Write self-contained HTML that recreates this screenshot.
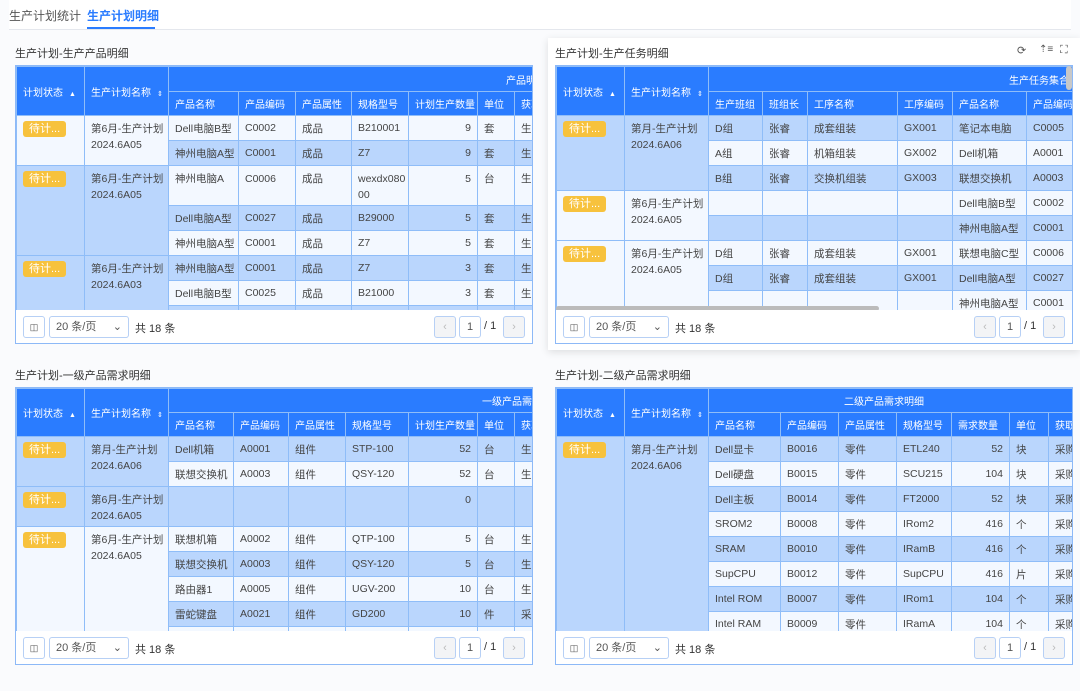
<!DOCTYPE html>
<html><head><meta charset="utf-8"><style>
*{box-sizing:border-box;margin:0;padding:0}
body{width:1080px;height:691px;background:#fafbfd;font-family:"Liberation Sans","Noto Sans CJK SC",sans-serif;position:relative;overflow:hidden;color:#333}
.tabs{position:absolute;left:9px;top:0;width:1062px;height:30px;border-bottom:1px solid #e4e7ed;background:#fff}
.tab{position:absolute;top:7px;font-size:12px;color:#555}
.tab.on{color:#2a7cff;font-weight:bold}
.ul{position:absolute;left:78px;top:27px;width:68px;height:2px;background:#2a7cff}
.title{position:absolute;font-size:11px;color:#333}
.card{position:absolute;left:548px;top:38px;width:532px;height:312px;background:#fff;box-shadow:0 2px 8px rgba(0,0,0,.12)}
.tw{position:absolute;overflow:hidden;border:1px solid #8db9f7;background:#fff}
table{border-collapse:collapse;table-layout:fixed;font-size:10.5px;color:#444}
th{background:#2a7cff;color:#fff;font-weight:normal;border:1px solid #8fbdf8;text-align:left;padding:0 6px;white-space:nowrap;overflow:hidden;font-size:10px}
td{border:1px solid #8fbdf8;height:25px;padding:0 6px;white-space:nowrap;overflow:hidden;vertical-align:middle}
td.n{text-align:right}
td.t{vertical-align:top;padding-top:5px;line-height:16px}
.a{background:#f3f8ff}.b{background:#bad6fd}
.tag{display:inline-block;background:#f7c23d;color:#fff;border-radius:3px;padding:0 6px;font-size:11px;line-height:16px}
.ft{position:absolute;height:34px;border:1px solid #8db9f7;border-top:none;background:#fff;font-size:11px}
.bx{position:absolute;top:6px;height:22px;border:1px solid #b7d0f5;border-radius:3px;background:#fff;font-size:11px;line-height:20px;color:#555}
.sort{font-size:7px;margin-left:6px}
</style></head><body>
<div class="tabs"><span class="tab" style="left:0">生产计划统计</span><span class="tab on" style="left:78px">生产计划明细</span><div class="ul"></div></div>

<div class="title" style="left:15px;top:45px">生产计划-生产产品明细</div>
<div class="card"></div>
<div class="title" style="left:555px;top:45px">生产计划-生产任务明细</div>
<div style="position:absolute;left:1017px;top:44px;font-size:11px;color:#555">⟳</div>
<div style="position:absolute;left:1039px;top:44px;font-size:10px;color:#555">⇡≡</div>
<div style="position:absolute;left:1060px;top:44px;font-size:11px;color:#555">⛶</div>
<div class="title" style="left:15px;top:367px">生产计划-一级产品需求明细</div>
<div class="title" style="left:555px;top:367px">生产计划-二级产品需求明细</div>

<!-- Panel 1 -->
<div class="tw" style="left:15px;top:65px;width:518px;height:246px">
<table style="width:620px">
<colgroup><col style="width:68px"><col style="width:84px"><col style="width:70px"><col style="width:57px"><col style="width:56px"><col style="width:57px"><col style="width:69px"><col style="width:37px"><col style="width:122px"></colgroup>
<tr style="height:25px"><th rowspan="2">计划状态<span class="sort">▲</span></th><th rowspan="2">生产计划名称<span class="sort">⇕</span></th><th colspan="7" style="text-align:left;padding-left:337px">产品明细</th></tr>
<tr style="height:24px"><th>产品名称</th><th>产品编码</th><th>产品属性</th><th>规格型号</th><th>计划生产数量</th><th>单位</th><th>获取方式</th></tr>
<tr class="a"><td class="t a" rowspan="2"><span class="tag">待计...</span></td><td class="t a" rowspan="2">第6月-生产计划<br>2024.6A05</td><td>Dell电脑B型</td><td>C0002</td><td>成品</td><td>B210001</td><td class="n">9</td><td>套</td><td>生产</td></tr>
<tr class="b"><td>神州电脑A型</td><td>C0001</td><td>成品</td><td>Z7</td><td class="n">9</td><td>套</td><td>生产</td></tr>
<tr class="a" style="height:40px"><td class="t b" rowspan="3"><span class="tag">待计...</span></td><td class="t b" rowspan="3">第6月-生产计划<br>2024.6A05</td><td class="t">神州电脑A</td><td class="t">C0006</td><td class="t">成品</td><td class="t">wexdx080<br>00</td><td class="t n">5</td><td class="t">台</td><td class="t">生产</td></tr>
<tr class="b"><td>Dell电脑A型</td><td>C0027</td><td>成品</td><td>B29000</td><td class="n">5</td><td>套</td><td>生产</td></tr>
<tr class="a"><td>神州电脑A型</td><td>C0001</td><td>成品</td><td>Z7</td><td class="n">5</td><td>套</td><td>生产</td></tr>
<tr class="b"><td class="t b" rowspan="3"><span class="tag">待计...</span></td><td class="t b" rowspan="3">第6月-生产计划<br>2024.6A03</td><td>神州电脑A型</td><td>C0001</td><td>成品</td><td>Z7</td><td class="n">3</td><td>套</td><td>生产</td></tr>
<tr class="a"><td>Dell电脑B型</td><td>C0025</td><td>成品</td><td>B21000</td><td class="n">3</td><td>套</td><td>生产</td></tr>
<tr class="b"><td></td><td></td><td></td><td></td><td></td><td></td><td></td></tr>
</table></div>

<!-- Panel 2 -->
<div class="tw" style="left:555px;top:65px;width:518px;height:246px">
<table style="width:620px">
<colgroup><col style="width:68px"><col style="width:84px"><col style="width:54px"><col style="width:45px"><col style="width:90px"><col style="width:55px"><col style="width:74px"><col style="width:60px"><col style="width:90px"></colgroup>
<tr style="height:25px"><th rowspan="2">计划状态<span class="sort">▲</span></th><th rowspan="2">生产计划名称<span class="sort">⇕</span></th><th colspan="7" style="padding-left:300px">生产任务集合</th></tr>
<tr style="height:24px"><th>生产班组</th><th>班组长</th><th>工序名称</th><th>工序编码</th><th>产品名称</th><th>产品编码</th><th>产品属性</th></tr>
<tr class="b"><td class="t b" rowspan="3"><span class="tag">待计...</span></td><td class="t b" rowspan="3">第月-生产计划<br>2024.6A06</td><td>D组</td><td>张睿</td><td>成套组装</td><td>GX001</td><td>笔记本电脑</td><td>C0005</td><td>成品</td></tr>
<tr class="a"><td>A组</td><td>张睿</td><td>机箱组装</td><td>GX002</td><td>Dell机箱</td><td>A0001</td><td>组件</td></tr>
<tr class="b"><td>B组</td><td>张睿</td><td>交换机组装</td><td>GX003</td><td>联想交换机</td><td>A0003</td><td>组件</td></tr>
<tr class="a"><td class="t a" rowspan="2"><span class="tag">待计...</span></td><td class="t a" rowspan="2">第6月-生产计划<br>2024.6A05</td><td></td><td></td><td></td><td></td><td>Dell电脑B型</td><td>C0002</td><td>成品</td></tr>
<tr class="b"><td></td><td></td><td></td><td></td><td>神州电脑A型</td><td>C0001</td><td>成品</td></tr>
<tr class="a"><td class="t a" rowspan="3"><span class="tag">待计...</span></td><td class="t a" rowspan="3">第6月-生产计划<br>2024.6A05</td><td>D组</td><td>张睿</td><td>成套组装</td><td>GX001</td><td>联想电脑C型</td><td>C0006</td><td>成品</td></tr>
<tr class="b"><td>D组</td><td>张睿</td><td>成套组装</td><td>GX001</td><td>Dell电脑A型</td><td>C0027</td><td>成品</td></tr>
<tr class="a"><td></td><td></td><td></td><td></td><td>神州电脑A型</td><td>C0001</td><td>成品</td></tr>
</table>
<div style="position:absolute;left:0;top:240px;width:323px;height:5px;border-radius:3px;background:#bbb"></div>
<div style="position:absolute;right:0;top:0;width:6px;height:24px;border-radius:3px;background:#c8c8c8"></div>
</div>

<!-- Panel 3 -->
<div class="tw" style="left:15px;top:387px;width:518px;height:245px">
<table style="width:620px">
<colgroup><col style="width:68px"><col style="width:84px"><col style="width:65px"><col style="width:55px"><col style="width:57px"><col style="width:63px"><col style="width:69px"><col style="width:37px"><col style="width:122px"></colgroup>
<tr style="height:24px"><th rowspan="2">计划状态<span class="sort">▲</span></th><th rowspan="2">生产计划名称<span class="sort">⇕</span></th><th colspan="7" style="padding-left:313px">一级产品需求明细</th></tr>
<tr style="height:24px"><th>产品名称</th><th>产品编码</th><th>产品属性</th><th>规格型号</th><th>计划生产数量</th><th>单位</th><th>获取方式</th></tr>
<tr class="b"><td class="t b" rowspan="2"><span class="tag">待计...</span></td><td class="t b" rowspan="2">第月-生产计划<br>2024.6A06</td><td>Dell机箱</td><td>A0001</td><td>组件</td><td>STP-100</td><td class="n">52</td><td>台</td><td>生产</td></tr>
<tr class="a"><td>联想交换机</td><td>A0003</td><td>组件</td><td>QSY-120</td><td class="n">52</td><td>台</td><td>生产</td></tr>
<tr class="b" style="height:40px"><td class="t b"><span class="tag">待计...</span></td><td class="t b">第6月-生产计划<br>2024.6A05</td><td></td><td></td><td></td><td></td><td class="t n">0</td><td></td><td></td></tr>
<tr class="a"><td class="t a" rowspan="5"><span class="tag">待计...</span></td><td class="t a" rowspan="5">第6月-生产计划<br>2024.6A05</td><td>联想机箱</td><td>A0002</td><td>组件</td><td>QTP-100</td><td class="n">5</td><td>台</td><td>生产</td></tr>
<tr class="b"><td>联想交换机</td><td>A0003</td><td>组件</td><td>QSY-120</td><td class="n">5</td><td>台</td><td>生产</td></tr>
<tr class="a"><td>路由器1</td><td>A0005</td><td>组件</td><td>UGV-200</td><td class="n">10</td><td>台</td><td>生产</td></tr>
<tr class="b"><td>雷蛇键盘</td><td>A0021</td><td>组件</td><td>GD200</td><td class="n">10</td><td>件</td><td>采购</td></tr>
<tr class="a"><td></td><td></td><td></td><td></td><td></td><td></td><td></td></tr>
</table></div>

<!-- Panel 4 -->
<div class="tw" style="left:555px;top:387px;width:518px;height:245px">
<table style="width:620px">
<colgroup><col style="width:68px"><col style="width:84px"><col style="width:72px"><col style="width:58px"><col style="width:58px"><col style="width:55px"><col style="width:58px"><col style="width:39px"><col style="width:128px"></colgroup>
<tr style="height:24px"><th rowspan="2">计划状态<span class="sort">▲</span></th><th rowspan="2">生产计划名称<span class="sort">⇕</span></th><th colspan="7" style="padding-left:135px">二级产品需求明细</th></tr>
<tr style="height:24px"><th>产品名称</th><th>产品编码</th><th>产品属性</th><th>规格型号</th><th>需求数量</th><th>单位</th><th>获取方式</th></tr>
<tr class="b"><td class="t b" rowspan="8"><span class="tag">待计...</span></td><td class="t b" rowspan="8">第月-生产计划<br>2024.6A06</td><td>Dell显卡</td><td>B0016</td><td>零件</td><td>ETL240</td><td class="n">52</td><td>块</td><td>采购</td></tr>
<tr class="a"><td>Dell硬盘</td><td>B0015</td><td>零件</td><td>SCU215</td><td class="n">104</td><td>块</td><td>采购</td></tr>
<tr class="b"><td>Dell主板</td><td>B0014</td><td>零件</td><td>FT2000</td><td class="n">52</td><td>块</td><td>采购</td></tr>
<tr class="a"><td>SROM2</td><td>B0008</td><td>零件</td><td>IRom2</td><td class="n">416</td><td>个</td><td>采购</td></tr>
<tr class="b"><td>SRAM</td><td>B0010</td><td>零件</td><td>IRamB</td><td class="n">416</td><td>个</td><td>采购</td></tr>
<tr class="a"><td>SupCPU</td><td>B0012</td><td>零件</td><td>SupCPU</td><td class="n">416</td><td>片</td><td>采购</td></tr>
<tr class="b"><td>Intel ROM</td><td>B0007</td><td>零件</td><td>IRom1</td><td class="n">104</td><td>个</td><td>采购</td></tr>
<tr class="a"><td>Intel RAM</td><td>B0009</td><td>零件</td><td>IRamA</td><td class="n">104</td><td>个</td><td>采购</td></tr>
</table></div>

<!-- Footers -->
<div class="ft" style="left:15px;top:310px;width:518px"><div class="bx" style="left:7px;width:22px;text-align:center;font-size:9px">◫</div><div class="bx" style="left:33px;width:80px;padding-left:6px">20 条/页<span style="position:absolute;right:6px">⌄</span></div><div style="position:absolute;left:119px;top:10px">共 18 条</div><div class="bx" style="left:418px;width:22px;background:#f3f4f6;text-align:center;color:#bbb">‹</div><div class="bx" style="left:443px;width:22px;text-align:center">1</div><div style="position:absolute;left:468px;top:10px">/ 1</div><div class="bx" style="left:487px;width:22px;background:#f3f4f6;text-align:center;color:#bbb">›</div></div>
<div class="ft" style="left:555px;top:310px;width:518px"><div class="bx" style="left:7px;width:22px;text-align:center;font-size:9px">◫</div><div class="bx" style="left:33px;width:80px;padding-left:6px">20 条/页<span style="position:absolute;right:6px">⌄</span></div><div style="position:absolute;left:119px;top:10px">共 18 条</div><div class="bx" style="left:418px;width:22px;background:#f3f4f6;text-align:center;color:#bbb">‹</div><div class="bx" style="left:443px;width:22px;text-align:center">1</div><div style="position:absolute;left:468px;top:10px">/ 1</div><div class="bx" style="left:487px;width:22px;background:#f3f4f6;text-align:center;color:#bbb">›</div></div>
<div class="ft" style="left:15px;top:631px;width:518px"><div class="bx" style="left:7px;width:22px;text-align:center;font-size:9px">◫</div><div class="bx" style="left:33px;width:80px;padding-left:6px">20 条/页<span style="position:absolute;right:6px">⌄</span></div><div style="position:absolute;left:119px;top:10px">共 18 条</div><div class="bx" style="left:418px;width:22px;background:#f3f4f6;text-align:center;color:#bbb">‹</div><div class="bx" style="left:443px;width:22px;text-align:center">1</div><div style="position:absolute;left:468px;top:10px">/ 1</div><div class="bx" style="left:487px;width:22px;background:#f3f4f6;text-align:center;color:#bbb">›</div></div>
<div class="ft" style="left:555px;top:631px;width:518px"><div class="bx" style="left:7px;width:22px;text-align:center;font-size:9px">◫</div><div class="bx" style="left:33px;width:80px;padding-left:6px">20 条/页<span style="position:absolute;right:6px">⌄</span></div><div style="position:absolute;left:119px;top:10px">共 18 条</div><div class="bx" style="left:418px;width:22px;background:#f3f4f6;text-align:center;color:#bbb">‹</div><div class="bx" style="left:443px;width:22px;text-align:center">1</div><div style="position:absolute;left:468px;top:10px">/ 1</div><div class="bx" style="left:487px;width:22px;background:#f3f4f6;text-align:center;color:#bbb">›</div></div>
</body></html>
